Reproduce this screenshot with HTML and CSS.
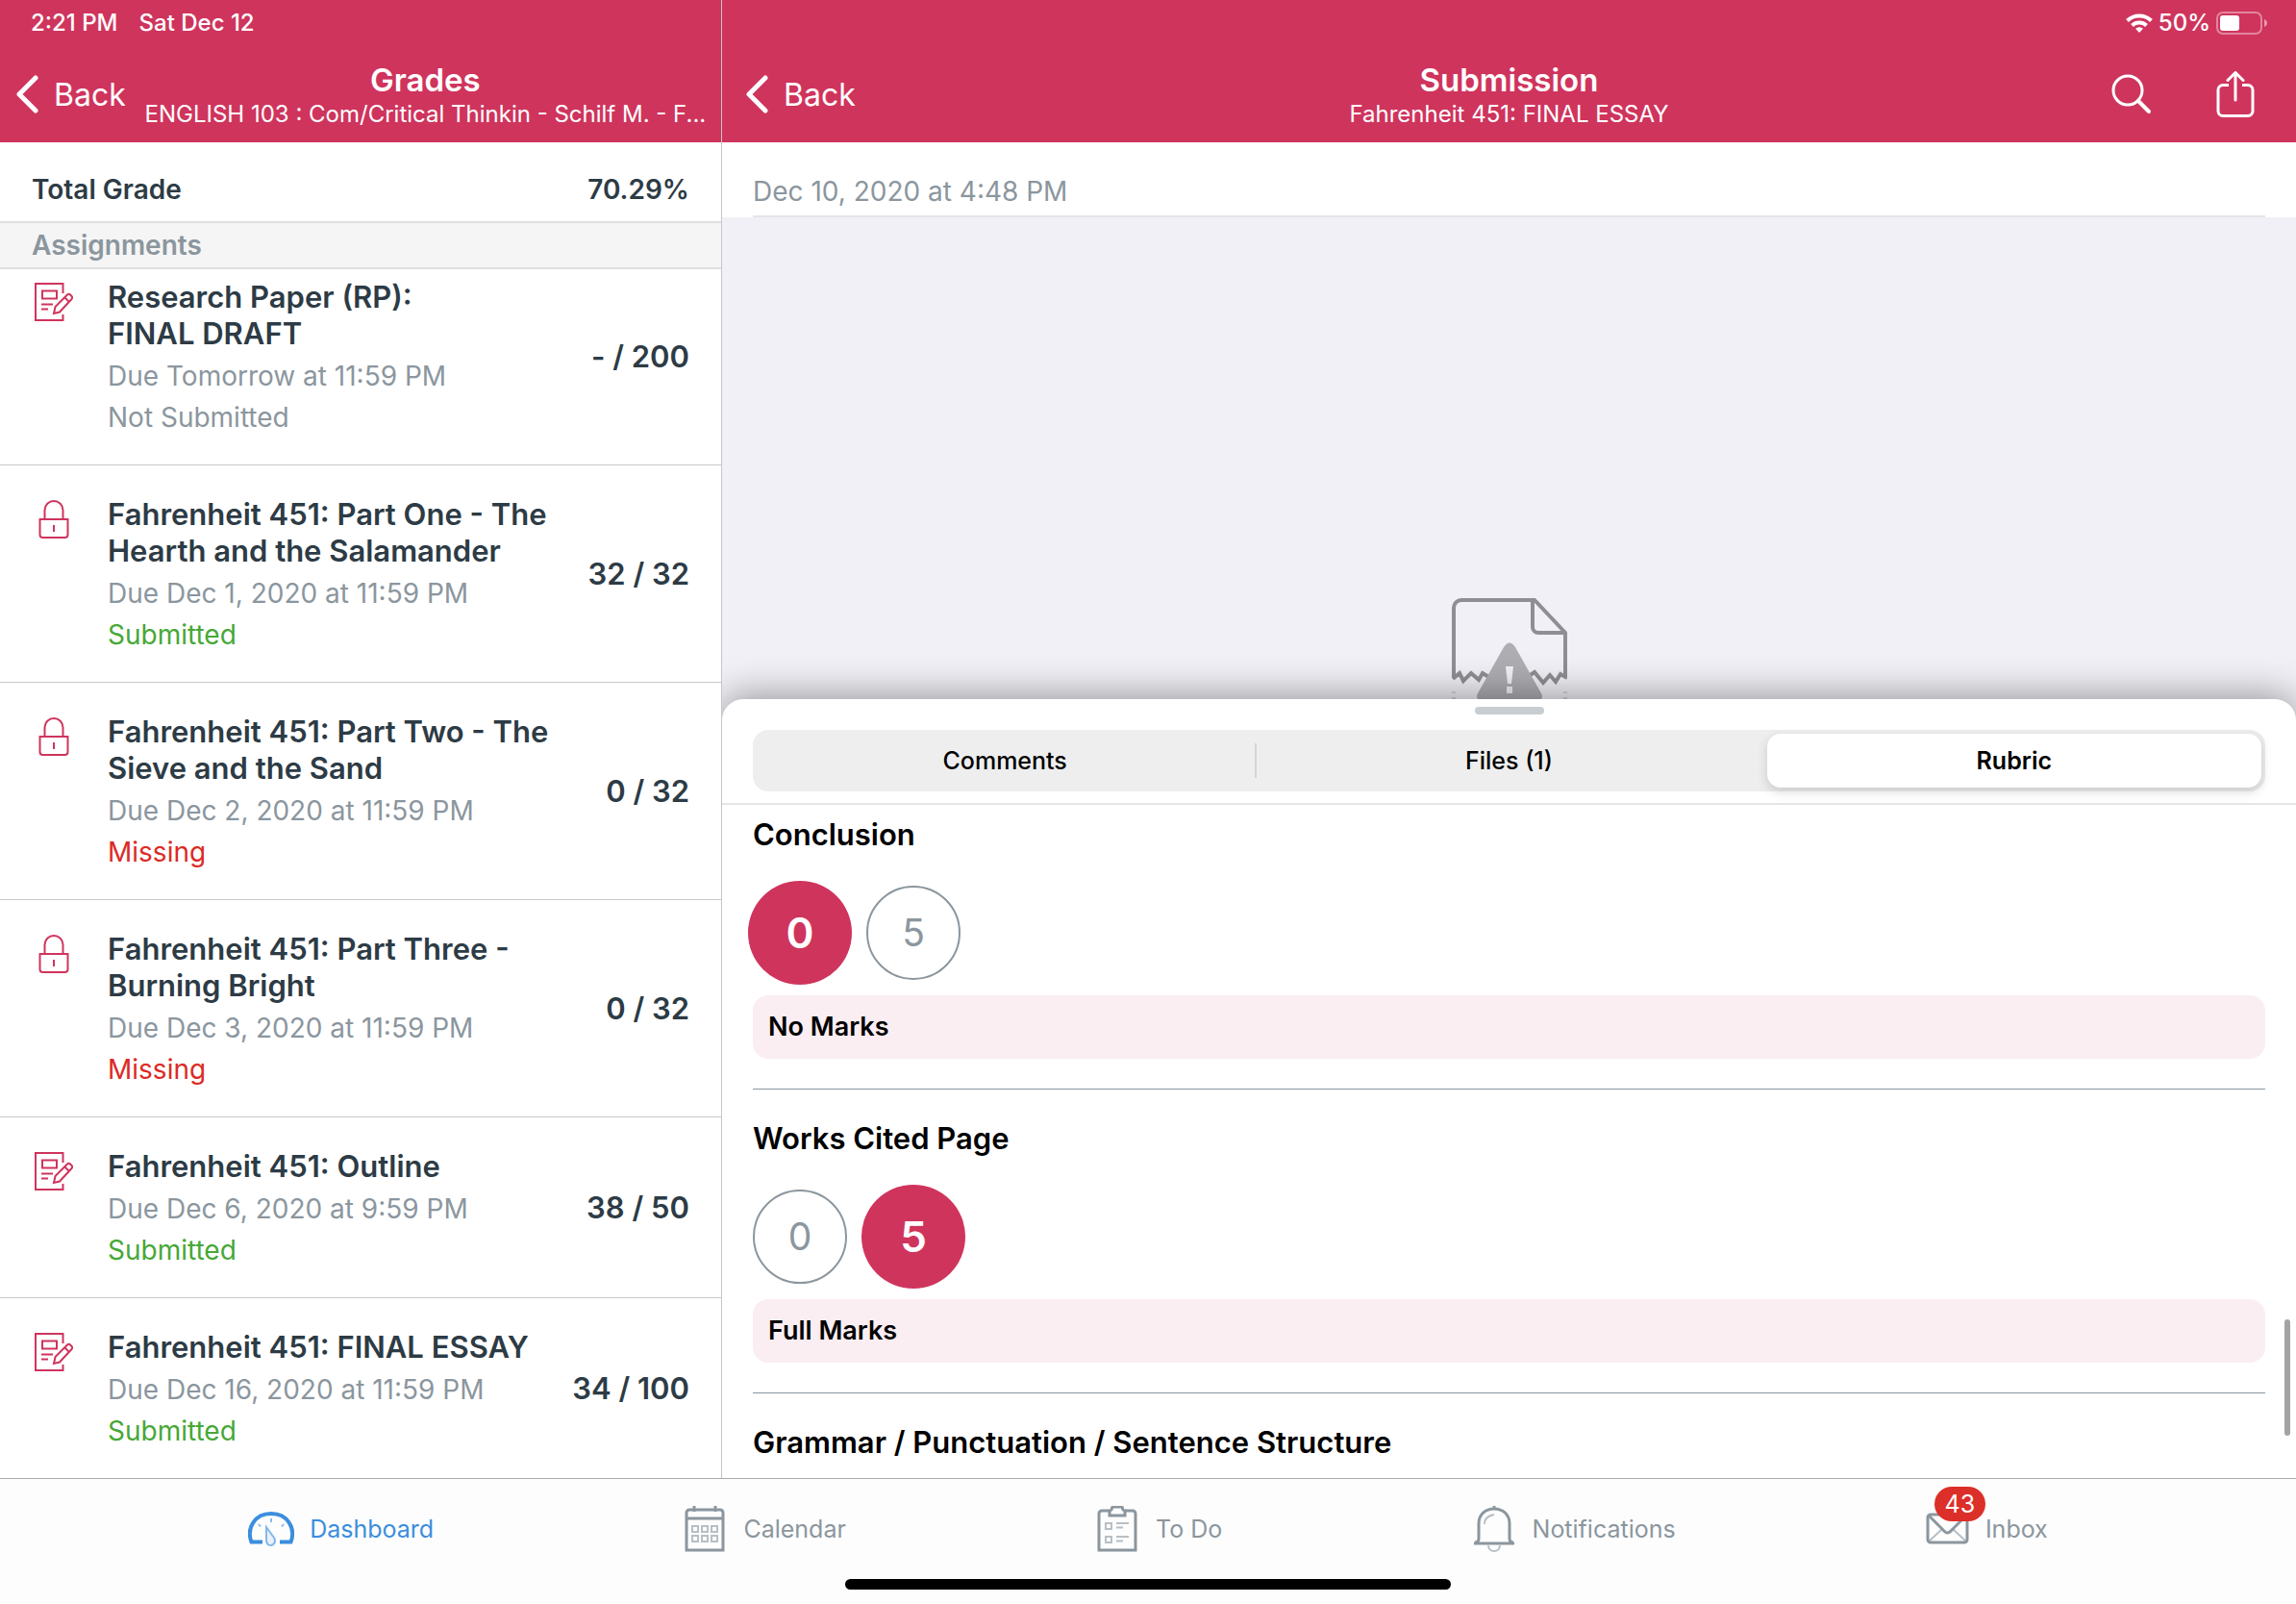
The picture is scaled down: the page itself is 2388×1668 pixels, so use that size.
FILE: index.html
```html
<!DOCTYPE html>
<html lang="en">
<head>
    <meta charset="UTF-8">
    <meta name="viewport" content="width=device-width, initial-scale=1.0">
    <title>Submission</title>
    <link rel="stylesheet" href="styles.css">
</head>
<body>

    <!-- Shared icons -->
    <svg class="sprite" aria-hidden="true">
        <symbol id="icon-assignment" viewBox="0 0 40 40">
            <g fill="none" stroke="currentColor" stroke-width="2">
                <path d="M29.5 11V1H1v38h28.5v-6"/>
                <path d="M8 8.5h15v8H8zM7 22.5h12M7 27.5h7"/>
                <path d="M20 32l1.5-7L34 12.5c1-1 2-1 3 0l1.5 1.5c1 1 1 2 0 3L26 30.5zM31.5 15.5l4.5 4.5"/>
            </g>
        </symbol>
        <symbol id="icon-lock" viewBox="0 0 40 40">
            <g fill="none" stroke="currentColor" stroke-width="2">
                <path d="M5.5 20h29v16a3 3 0 0 1-3 3h-23a3 3 0 0 1-3-3z"/>
                <path d="M10.5 20v-9.5a9.5 9.5 0 0 1 19 0V20M20 26v7"/>
            </g>
        </symbol>
        <symbol id="icon-back" viewBox="0 0 24 40">
            <path d="M21 3L4 20l17 17" fill="none" stroke="currentColor" stroke-width="5" stroke-linecap="round" stroke-linejoin="round"/>
        </symbol>
    </svg>

    <div class="app">
        <!-- Grades list -->
        <section class="sidebar">
            <header class="header">
                <div class="status">
                    <span>2:21 PM</span>
                    <span>Sat Dec 12</span>
                </div>
                <div class="nav">
                    <button class="back"><svg class="chevron"><use href="#icon-back"/></svg>Back</button>
                    <div class="nav-title">
                        <h1>Grades</h1>
                        <p>ENGLISH 103 : Com/Critical Thinkin - Schilf M. - F...</p>
                    </div>
                </div>
            </header>

            <div class="total">
                <span>Total Grade</span>
                <span>70.29%</span>
            </div>
            <h2 class="group">Assignments</h2>

            <div class="list-wrap">
                <div class="list">
                    <a class="row" href="#">
                        <svg class="row-icon"><use href="#icon-assignment"/></svg>
                        <div class="row-text">
                            <h3>Research Paper (RP): FINAL&nbsp;DRAFT</h3>
                            <p class="due">Due Tomorrow at 11:59 PM</p>
                            <p class="state">Not Submitted</p>
                        </div>
                        <span class="score">- / 200</span>
                    </a>
                    <a class="row" href="#">
                        <svg class="row-icon"><use href="#icon-lock"/></svg>
                        <div class="row-text">
                            <h3>Fahrenheit 451: Part One - The Hearth and the Salamander</h3>
                            <p class="due">Due Dec 1, 2020 at 11:59 PM</p>
                            <p class="state submitted">Submitted</p>
                        </div>
                        <span class="score">32 / 32</span>
                    </a>
                    <a class="row" href="#">
                        <svg class="row-icon"><use href="#icon-lock"/></svg>
                        <div class="row-text">
                            <h3>Fahrenheit 451: Part Two - The Sieve and the Sand</h3>
                            <p class="due">Due Dec 2, 2020 at 11:59 PM</p>
                            <p class="state missing">Missing</p>
                        </div>
                        <span class="score">0 / 32</span>
                    </a>
                    <a class="row" href="#">
                        <svg class="row-icon"><use href="#icon-lock"/></svg>
                        <div class="row-text">
                            <h3>Fahrenheit 451: Part Three - Burning Bright</h3>
                            <p class="due">Due Dec 3, 2020 at 11:59 PM</p>
                            <p class="state missing">Missing</p>
                        </div>
                        <span class="score">0 / 32</span>
                    </a>
                    <a class="row" href="#">
                        <svg class="row-icon"><use href="#icon-assignment"/></svg>
                        <div class="row-text">
                            <h3>Fahrenheit 451: Outline</h3>
                            <p class="due">Due Dec 6, 2020 at 9:59 PM</p>
                            <p class="state submitted">Submitted</p>
                        </div>
                        <span class="score">38 / 50</span>
                    </a>
                    <a class="row" href="#">
                        <svg class="row-icon"><use href="#icon-assignment"/></svg>
                        <div class="row-text">
                            <h3>Fahrenheit 451: FINAL ESSAY</h3>
                            <p class="due">Due Dec 16, 2020 at 11:59 PM</p>
                            <p class="state submitted">Submitted</p>
                        </div>
                        <span class="score">34 / 100</span>
                    </a>
                </div>
            </div>
        </section>

        <!-- Submission -->
        <section class="detail">
            <header class="header">
                <div class="status status-right">
                    <svg class="wifi" viewBox="0 0 28 20">
                        <g fill="none" stroke="#fff" stroke-width="4">
                            <path d="M1.5 7.5a18 18 0 0 1 25 0"/>
                            <path d="M6.5 12.5a11 11 0 0 1 15 0"/>
                        </g>
                        <path d="M14 20l-4-4.2a6 6 0 0 1 8 0z" fill="#fff"/>
                    </svg>
                    <span>50%</span>
                    <svg class="battery" viewBox="0 0 54 24">
                        <rect x="1" y="1" width="46" height="22" rx="6" fill="none" stroke="#fff" stroke-opacity=".4" stroke-width="2"/>
                        <rect x="4" y="4" width="20" height="16" rx="3" fill="#fff"/>
                        <path d="M50 8c4 1.5 4 6.5 0 8z" fill="#fff" fill-opacity=".5"/>
                    </svg>
                </div>
                <div class="nav nav-wide">
                    <button class="back"><svg class="chevron"><use href="#icon-back"/></svg>Back</button>
                    <div class="nav-title">
                        <h1>Submission</h1>
                        <p>Fahrenheit 451: FINAL ESSAY</p>
                    </div>
                    <div class="actions">
                        <button aria-label="Search">
                            <svg viewBox="0 0 48 48">
                                <g fill="none" stroke="#fff" stroke-linecap="round">
                                    <circle cx="20" cy="20" r="15" stroke-width="3"/>
                                    <path d="M31 31l11 11" stroke-width="4"/>
                                </g>
                            </svg>
                        </button>
                        <button aria-label="Share">
                            <svg viewBox="0 0 48 48">
                                <g fill="none" stroke="#fff" stroke-width="3" stroke-linecap="round" stroke-linejoin="round">
                                    <path d="M17 14.5h-6a5 5 0 0 0-5 5v22a5 5 0 0 0 5 5h26a5 5 0 0 0 5-5v-22a5 5 0 0 0-5-5h-6" stroke-linecap="butt"/>
                                    <path d="M24 30V2M16 9.5L24 1.5l8 8"/>
                                </g>
                            </svg>
                        </button>
                    </div>
                </div>
            </header>

            <p class="date">Dec 10, 2020 at 4:48 PM</p>

            <div class="preview">
                <svg class="torn" viewBox="0 0 120 105">
                    <g fill="none" stroke="#8e8e93" stroke-width="4">
                        <path d="M2 83V10a8 8 0 0 1 8-8h76l32 34v47"/>
                        <path d="M84 2v28a6 6 0 0 0 6 6h28"/>
                        <path d="M1 84l7-6 4 8 8-8 8 7 4-7 8 5M80 81l6-4 9 11 7-8 6 7 5-8 7 4"/>
                    </g>
                    <path d="M0 97h4v2H0zm0 6h4v2H0zM116 97h4v2h-4zm0 6h4v2h-4z" fill="#8e8e93" fill-opacity=".3"/>
                    <path d="M54 51q6-9 12 0l27 48q2 3 0 6H27q-2-3 0-6z" fill="#aeaeb2"/>
                    <path d="M56 71h8l-2 18h-4zM57 92h6v7h-6z" fill="#f1f0f6"/>
                </svg>
            </div>

            <div class="sheet">
                <div class="handle"></div>
                <div class="segments">
                    <button>Comments</button>
                    <button>Files (1)</button>
                    <button class="selected">Rubric</button>
                </div>

                <div class="rubric">
                    <div class="criteria">
                        <div class="criterion">
                            <h2>Conclusion</h2>
                            <div class="points">
                                <button class="picked">0</button>
                                <button>5</button>
                            </div>
                            <p class="rating">No Marks</p>
                        </div>
                        <div class="criterion">
                            <h2>Works Cited Page</h2>
                            <div class="points">
                                <button>0</button>
                                <button class="picked">5</button>
                            </div>
                            <p class="rating">Full Marks</p>
                        </div>
                        <div class="criterion">
                            <h2>Grammar / Punctuation / Sentence Structure</h2>
                        </div>
                    </div>
                </div>
                <div class="scrollbar"></div>
            </div>
        </section>
    </div>

    <!-- Tab bar -->
    <nav class="tabs">
        <div class="tab-items">
            <a class="active" href="#">
                <svg viewBox="0 0 48 48">
                    <g fill="none" stroke="currentColor">
                        <path d="M15 37.5H3.5C-2 23 7 8 24 8s26 15 20.5 29.5H33" stroke-width="4"/>
                        <path d="M24 13v4M11 19l2 2.5M37 19l-2 2.5" stroke-width="2" stroke-opacity=".6"/>
                        <path d="M19 22l8 11c3 5-1 8-3.5 8S19 39 19 35z" fill="currentColor" fill-opacity=".1" stroke-width="2" stroke-opacity=".6"/>
                    </g>
                </svg>
                Dashboard
            </a>
            <a href="#">
                <svg viewBox="0 0 48 48">
                    <g fill="none" stroke="currentColor" stroke-width="2">
                        <path d="M5 46V7a3 3 0 0 1 3-3h32a3 3 0 0 1 3 3v39zM5 13h38M13 0v6M35 0v6" stroke-width="3"/>
                        <path d="M11 21h6v6h-6zM21 21h6v6h-6zM31 21h6v6h-6zM11 31h6v6h-6zM21 31h6v6h-6zM31 31h6v6h-6z" stroke-opacity=".6"/>
                    </g>
                </svg>
                Calendar
            </a>
            <a href="#">
                <svg viewBox="0 0 48 48">
                    <g fill="none" stroke="currentColor" stroke-width="2">
                        <path d="M16 5H8a3 3 0 0 0-3 3v38h38V8a3 3 0 0 0-3-3h-8" stroke-width="3"/>
                        <path d="M16 10V5l2-1 1-3h10l1 3 2 1v5z" stroke-width="3"/>
                        <path d="M12 18h6v6h-6zM12 32h6v6h-6zM23 18h13M23 22.5h7M23 32h13M23 36.5h7" stroke-opacity=".6"/>
                    </g>
                </svg>
                To Do
            </a>
            <a href="#">
                <svg viewBox="0 0 48 48">
                    <g fill="none" stroke="currentColor" stroke-width="2">
                        <path d="M3 39h42M4 38q4 0 4-4V18C8 9 15 3 24 3s16 6 16 15v16q0 4 4 4M24 0v3" stroke-width="3"/>
                        <path d="M14 19c0-6 4-9 10-10M18 41c0 8 12 8 12 0" stroke-opacity=".6"/>
                    </g>
                </svg>
                Notifications
            </a>
            <a href="#">
                <span class="inbox-icon">
                    <svg viewBox="0 0 48 48">
                        <g fill="none" stroke="currentColor">
                            <path d="M5 37l14-13M44 37L30 24" stroke-width="2" stroke-opacity=".6"/>
                            <rect x="4" y="9" width="41" height="29" rx="3" stroke-width="3"/>
                            <path d="M5 10l17 17q2 2 5 0l17-17" stroke-width="3"/>
                        </g>
                    </svg>
                    <span class="badge">43</span>
                </span>
                Inbox
            </a>
        </div>
        <div class="home-bar"></div>
    </nav>

</body>
</html>
```

FILE: styles.css
```css
* {
    margin: 0;
    padding: 0;
    box-sizing: border-box;
}

body {
    display: flex;
    flex-direction: column;
    height: 100vh;
    overflow: hidden;
    background: #fefefe;
    color: #2d3b45;
    font-family: Inter, "Liberation Sans", sans-serif;
    font-size: 28px;
    line-height: 34px;
}

button {
    border: none;
    background: none;
    color: inherit;
    font: inherit;
    cursor: pointer;
}

a {
    color: inherit;
    text-decoration: none;
}

svg {
    display: block;
    flex: none;
}

.sprite {
    position: absolute;
    width: 0;
    height: 0;
}

.app {
    flex: 1;
    min-height: 0;
    display: grid;
    grid-template-columns: 751px 1fr;
    grid-template-rows: 100%;
}

/* Pink header with the status line and navigation */
.header {
    flex: none;
    background: #cf345d;
    color: #fff;
}

.status {
    display: flex;
    align-items: center;
    gap: 22px;
    height: 48px;
    padding: 0 32px;
    font-size: 24px;
    font-weight: 500;
}

.status-right {
    justify-content: flex-end;
    gap: 6px;
    padding-right: 29px;
}

.wifi {
    width: 28px;
    height: 20px;
}

.battery {
    width: 54px;
    height: 24px;
}

.nav {
    display: flex;
    align-items: center;
    gap: 16px;
    height: 100px;
    padding: 0 12px 0 16px;
}

.nav-wide {
    display: grid;
    grid-template-columns: 1fr auto 1fr;
    padding: 0 24px;
}

.back {
    display: flex;
    align-items: center;
    gap: 16px;
    font-size: 32px;
    line-height: 41px;
}

.chevron {
    width: 24px;
    height: 40px;
}

.nav-title {
    flex: 1;
    min-width: 0;
    text-align: center;
}

.nav-title h1 {
    font-size: 33px;
    line-height: 41px;
    font-weight: 600;
}

.nav-title p {
    font-size: 24px;
    line-height: 29px;
    white-space: nowrap;
}

.actions {
    display: flex;
    justify-content: flex-end;
    gap: 60px;
    padding-right: 15px;
}

.actions svg {
    width: 48px;
    height: 48px;
}

/* Grades list */
.sidebar {
    display: flex;
    flex-direction: column;
    min-width: 0;
    background: #fff;
    border-right: 1px solid #c6c6c8;
}

.total {
    display: flex;
    justify-content: space-between;
    padding: 32px 33px 16px;
    font-weight: 600;
}

.group {
    padding: 6px 33px;
    background: #f5f5f5;
    border: solid #dfdfdf;
    border-width: 2px 0;
    color: #8b969e;
    font-size: 28px;
    font-weight: 600;
}

.list-wrap {
    flex: 1;
    min-height: 0;
    overflow: hidden;
}

/* The list is scrolled a little under the group title */
.list {
    margin-top: -22px;
}

.row {
    display: flex;
    align-items: center;
    gap: 36px;
    padding: 32px 33px 32px 36px;
    border-bottom: 1px solid #c6c8ca;
}

.row-icon {
    align-self: flex-start;
    width: 40px;
    height: 40px;
    margin-top: 4px;
    color: #cf345d;
}

.row-text {
    flex: 1;
    min-width: 0;
}

.row-text h3 {
    max-width: 480px;
    font-size: 31px;
    line-height: 38px;
    font-weight: 600;
}

.due {
    margin: 8px 0 9px;
    color: #8b969e;
}

.state {
    color: #8b969e;
}

.submitted {
    color: #46a836;
}

.missing {
    color: #dc2a25;
}

.score {
    flex: none;
    font-size: 31px;
    line-height: 38px;
    font-weight: 600;
}

/* Submission */
.detail {
    display: flex;
    flex-direction: column;
    min-width: 0;
    overflow: hidden;
    background: #f1f0f6;
}

.date {
    padding: 34px 0 10px;
    background: #fff linear-gradient(#e5e5e7, #e5e5e7) no-repeat 32px 100%;
    background-size: calc(100% - 64px) 2px;
    color: #8b969e;
    text-indent: 32px;
}

.preview {
    flex: 501 1 0;
    display: flex;
    align-items: flex-end;
    justify-content: center;
}

.torn {
    width: 120px;
    height: 105px;
}

.sheet {
    position: relative;
    flex: 810 1 0;
    min-height: 0;
    display: flex;
    flex-direction: column;
    background: #fff;
    border-radius: 22px 22px 0 0;
    box-shadow: 0 -4px 38px rgba(0, 0, 0, 0.38);
    color: #000;
}

.handle {
    flex: none;
    width: 72px;
    height: 8px;
    margin: 8px auto 16px;
    border-radius: 4px;
    background: #c7cdd1;
}

.segments {
    flex: none;
    display: grid;
    grid-template-columns: repeat(3, 1fr);
    height: 64px;
    margin: 0 32px 12px;
    border-radius: 16px;
    background: #eee;
}

.segments button {
    font-size: 25px;
    font-weight: 500;
}

.segments button:first-child {
    background: linear-gradient(#d5d5d6, #d5d5d6) no-repeat 100% 50% / 2px 36px;
}

.segments .selected {
    margin: 4px 4px 4px 6px;
    border-radius: 14px;
    background: #fff;
    box-shadow: 0 4px 12px rgba(0, 0, 0, 0.16);
    font-weight: 600;
}

.rubric {
    flex: 1;
    min-height: 0;
    overflow: hidden;
    border-top: 2px solid #e5e5e7;
}

.criteria {
    margin-top: -20px;
    padding: 0 32px;
}

.criterion {
    padding: 32px 0 31px;
    border-bottom: 1px solid #8b969e;
}

.criterion h2 {
    font-size: 31px;
    line-height: 38px;
    font-weight: 600;
}

.points {
    display: flex;
    gap: 20px;
    margin: 34px 0 16px;
}

.points button {
    width: 98px;
    height: 98px;
    border: 2px solid #8b969e;
    border-radius: 50%;
    color: #8b969e;
    font-size: 39px;
}

/* The picked value is drawn larger than its slot */
.points .picked {
    width: 108px;
    height: 108px;
    margin: -5px;
    border: none;
    background: #cf345d;
    color: #fff;
    font-size: 44px;
    font-weight: 600;
}

.rating {
    padding: 16px;
    border-radius: 16px;
    background: #faeef2;
    font-size: 27px;
    font-weight: 600;
}

.scrollbar {
    position: absolute;
    right: 6px;
    bottom: 44px;
    width: 6px;
    height: 121px;
    border-radius: 3px;
    background: #a4a4a4;
}

/* Tab bar */
.tabs {
    flex: none;
    border-top: 1px solid #a9aaac;
    background: #fdfdfd;
}

.tab-items {
    display: flex;
    justify-content: space-evenly;
    color: #8b969e;
    font-size: 25px;
}

.tab-items a {
    display: flex;
    align-items: center;
    gap: 16px;
    height: 104px;
}

.tab-items .active {
    color: #3b8ede;
}

.tab-items svg {
    width: 48px;
    height: 48px;
}

.inbox-icon {
    position: relative;
}

.badge {
    position: absolute;
    top: -20px;
    left: 11px;
    min-width: 53px;
    border-radius: 18px;
    background: #dc2f29;
    color: #fff;
    line-height: 36px;
    text-align: center;
}

.home-bar {
    width: 630px;
    max-width: 60%;
    height: 11px;
    margin: 0 auto 15px;
    border-radius: 6px;
    background: #000;
}
```
